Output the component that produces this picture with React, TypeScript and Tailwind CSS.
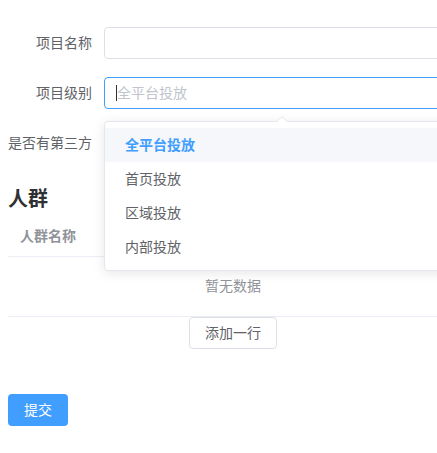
import React from "react";

const font = { fontFamily: '"Helvetica Neue", Helvetica, "Noto Sans CJK SC", "Noto Sans", sans-serif' };

function Label({ children }: { children: React.ReactNode }) {
  return (
    <div className="w-[96px] shrink-0 pr-[12px] text-right text-[14px] leading-[32px] text-[#606266]">
      {children}
    </div>
  );
}

export default function App() {
  const items = ["全平台投放", "首页投放", "区域投放", "内部投放"];
  return (
    <div className="relative h-[453px] w-[437px] overflow-hidden bg-white" style={font}>
      <div className="flex w-[466px] flex-col px-[8px] pt-[27px]">
        {/* row 1 */}
        <div className="mb-[18px] flex">
          <Label>项目名称</Label>
          <div className="h-[32px] flex-1 rounded-[4px] border border-[#dcdfe6] bg-white" />
        </div>
        {/* row 2 */}
        <div className="mb-[18px] flex">
          <Label>项目级别</Label>
          <div className="relative flex h-[32px] flex-1 items-center rounded-[4px] border border-[#409eff] bg-white pl-[11px]">
            <span className="h-[16px] w-px bg-[#303133]" />
            <span className="text-[14px] text-[#c0c4cc]">全平台投放</span>
            <svg className="absolute right-[8px] top-[9px]" width="14" height="14" viewBox="0 0 14 14">
              <path d="M3 9 L7 5 L11 9" fill="none" stroke="#c0c4cc" strokeWidth="1.3" />
            </svg>
          </div>
        </div>
        {/* row 3 */}
        <div className="flex h-[32px]">
          <div className="w-[96px] shrink-0 whitespace-nowrap pr-[12px] text-right text-[14px] leading-[32px] text-[#606266]">
            是否有第三方
          </div>
        </div>
        <h3 className="mt-[26px] h-[28px] text-[20px] font-bold leading-[28px] text-[#303133]">人群</h3>
        <div className="mt-[4px]">
          <div className="flex h-[40px] items-center border-b border-[#ebeef5] pl-[12px] text-[14px] font-bold text-[#909399]">
            人群名称
          </div>
          <div className="flex h-[60px] items-center justify-center border-b border-[#ebeef5] text-[14px] text-[#909399]">
            暂无数据
          </div>
          <div className="flex justify-center">
            <button className="h-[32px] w-[88px] rounded-[4px] border border-[#dcdfe6] bg-white text-[14px] text-[#606266]">
              添加一行
            </button>
          </div>
        </div>
        <div className="mt-[45px]">
          <button className="h-[32px] w-[60px] rounded-[4px] bg-[#409eff] text-[14px] text-white">提交</button>
        </div>
      </div>

      {/* dropdown */}
      <div className="absolute left-[104px] top-[121px] w-[354px] rounded-[4px] border border-[#e4e7ed] bg-white py-[6px] shadow-[0_2px_12px_rgba(0,0,0,0.1)]">
        <div className="absolute -top-[6px] left-[171px] h-0 w-0 border-x-[6px] border-b-[6px] border-x-transparent border-b-[#e4e7ed]" />
        <div className="absolute -top-[5px] left-[171px] h-0 w-0 border-x-[6px] border-b-[6px] border-x-transparent border-b-white" />
        {items.map((t, i) => (
          <div
            key={t}
            className={
              i === 0
                ? "h-[34px] bg-[#f5f7fa] pl-[20px] text-[14px] font-bold leading-[34px] text-[#409eff]"
                : "h-[34px] pl-[20px] text-[14px] leading-[34px] text-[#606266]"
            }
          >
            {t}
          </div>
        ))}
      </div>
    </div>
  );
}
